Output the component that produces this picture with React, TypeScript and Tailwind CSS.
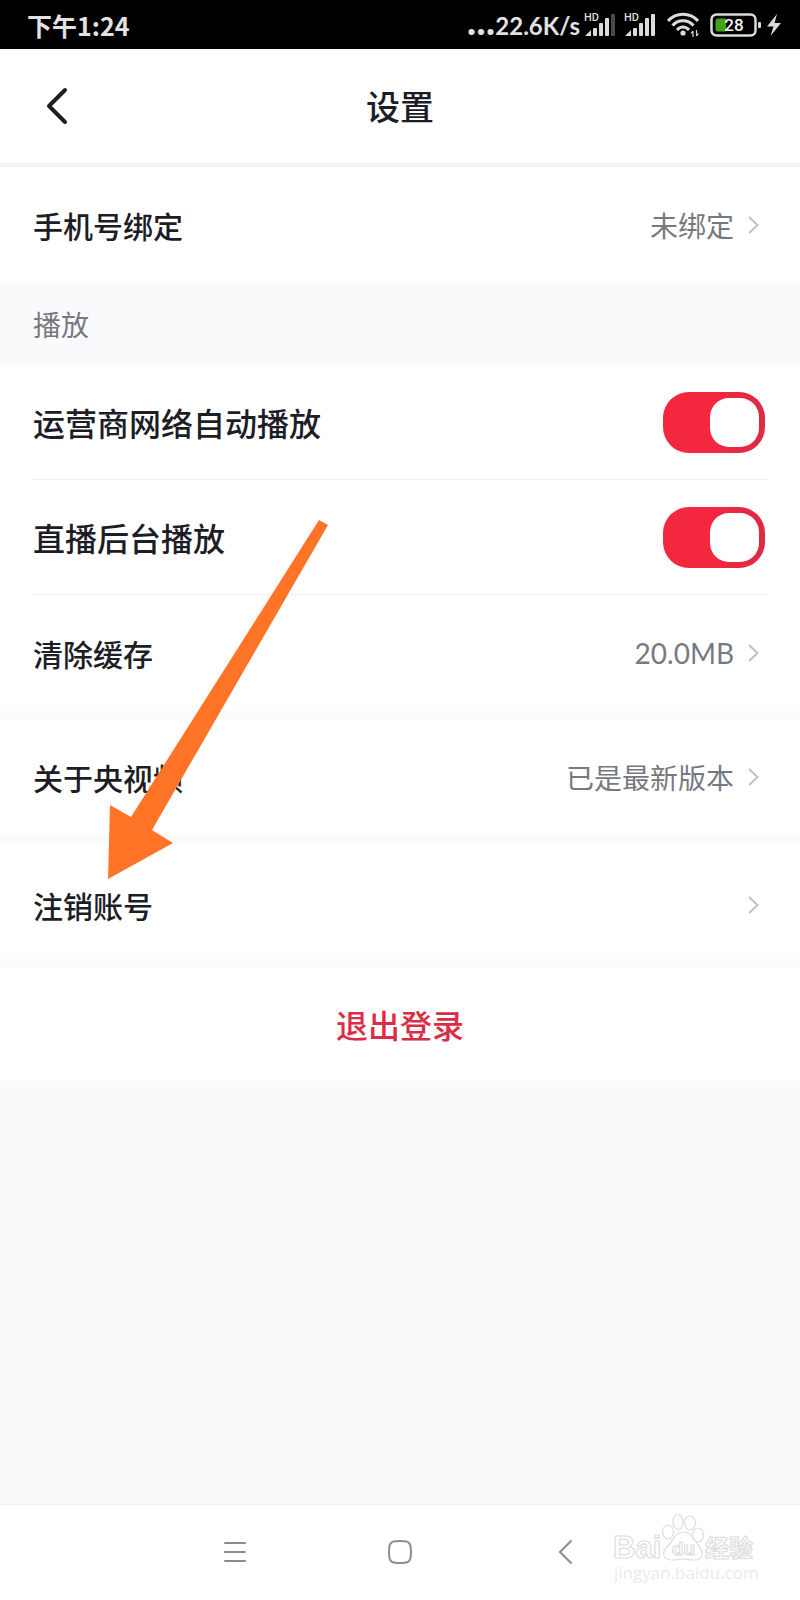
import { useState, type ReactNode } from 'react'
import clsx from 'clsx'

function SignalIcon({ weak = false }: { weak?: boolean }) {
  return (
    <svg width="31" height="28" viewBox="0 -4 31 28" fill="#dcdcdc" aria-label="HD">
      <text x="0" y="8" fontSize="11" fontWeight="500" fontFamily="Roboto, sans-serif">HD</text>
      <path d="M1 23 L7 17 V23 Z" />
      <rect x="9" y="15" width="4" height="8" rx="1" />
      <rect x="15" y="10" width="4" height="13" rx="1" />
      <rect x="21" y="5" width="4" height="18" rx="1" />
      <rect x="27" y="1" width="4" height="22" rx="1" fill={weak ? '#4a4a4a' : '#dcdcdc'} />
    </svg>
  )
}

function WifiIcon() {
  return (
    <svg width="32" height="26" viewBox="0 0 32 26" fill="none" stroke="#dcdcdc" strokeWidth="3">
      <path d="M1 9 C9 0 23 0 31 9" />
      <path d="M5.5 13.5 C11 7 21 7 26.5 13.5" />
      <path d="M10 18 C13.5 14 18.5 14 22 18" />
      <circle cx="16" cy="21" r="2.6" fill="#dcdcdc" stroke="none" />
      <path d="M26 19 V25 M29.500 18 V24 M24 21.500 L26 19 M29.500 24 L31.500 21.500" strokeWidth="1.200" />
    </svg>
  )
}

function BatteryIcon() {
  return (
    <svg width="51" height="24" viewBox="0 0 51 24" aria-label="28%">
      <rect x="1.500" y="1.500" width="44" height="21" rx="5" fill="none" stroke="#dcdcdc" strokeWidth="2.500" />
      <path d="M8 5.500 H16 V18.500 H8 Q5.500 18.500 5.500 16 V8 Q5.500 5.500 8 5.500 Z" fill="#43a312" />
      <rect x="48" y="9" width="3" height="6" rx="1" fill="#dcdcdc" />
      <text x="24" y="18" fontSize="17" fontWeight="500" textAnchor="middle" fill="#f4f4f4" fontFamily="Roboto, sans-serif">
        28
      </text>
    </svg>
  )
}

function StatusBar() {
  return (
    <div className="flex h-[49px] items-center justify-between bg-black pl-[27px] pr-[18px] text-[#e2e2e2]">
      <span className="text-[25px] font-bold leading-8">下午1:24</span>
      <div className="flex items-center">
        <span className="mr-1 flex items-baseline pb-1 font-['Lato',sans-serif] text-[24px] font-bold leading-8">
          <span className="text-[40px] leading-8">...</span>22.6K/s
        </span>
        <span className="flex pb-1"><SignalIcon weak /></span>
        <span className="ml-[9px] flex pb-1"><SignalIcon /></span>
        <span className="ml-3 flex"><WifiIcon /></span>
        <span className="ml-[11px] flex"><BatteryIcon /></span>
        <svg className="ml-[5px]" width="16" height="24" viewBox="0 0 16 24" fill="#dcdcdc">
          <path d="M11 1 L1 13.500 H7.500 L4.500 23 L15 10 H8.500 Z" />
        </svg>
      </div>
    </div>
  )
}

function Chevron() {
  return (
    <svg width="11" height="18" viewBox="0 0 11 18" fill="none" stroke="#bdbdc3" strokeWidth="1.800">
      <path d="M1 1 L9.500 9 L1 17" />
    </svg>
  )
}

function LinkRow({ label, value, className }: { label: string; value?: ReactNode; className?: string }) {
  return (
    <button
      type="button"
      className={clsx('flex h-[116px] w-full items-center justify-between bg-white pl-[33px] pr-[41px] text-left', className)}
    >
      <span className="text-[30px] font-medium leading-10">{label}</span>
      <span className="flex items-center gap-[14px] text-[28px] leading-10 text-[#777981]">
        {value}
        <Chevron />
      </span>
    </button>
  )
}

function SwitchRow({ id, label }: { id: string; label: string }) {
  const [on, setOn] = useState(true)

  return (
    <div className="bg-white px-[33px]">
      <div className="flex h-[115px] items-center justify-between border-b border-[#efeff1]">
        <label htmlFor={id} className="text-[32px] font-medium leading-10">{label}</label>
        <input
          id={id}
          type="checkbox"
          role="switch"
          checked={on}
          onChange={e => setOn(e.target.checked)}
          className="mr-[2px] flex h-[61px] w-[102px] cursor-pointer appearance-none items-center rounded-[26px] bg-[#c9c9ce] px-[6px] before:block before:size-[49px] before:rounded-[19px] before:bg-white checked:justify-end checked:bg-linear-to-r checked:from-[#f3273f] checked:from-50% checked:to-[#dc2a45]"
        />
      </div>
    </div>
  )
}

function NavButton({ label, children }: { label: string; children: ReactNode }) {
  return (
    <button type="button" aria-label={label} className="flex h-full items-center justify-center text-[#8c8c8c]">
      {children}
    </button>
  )
}

function Watermark() {
  return (
    <svg
      className="pointer-events-none absolute right-[40px] bottom-[12px]"
      width="148"
      height="76"
      viewBox="0 0 148 76"
      fill="#ffffff"
      stroke="#dedede"
      strokeWidth="1.200"
      fontFamily="'Liberation Sans', 'Noto Sans CJK SC', sans-serif"
    >
      <text x="1" y="46" fontSize="31" fontWeight="700">Bai</text>
      <path d="M71 20 C63 20 61 29 56 34 C48 41 52 48 60 48 C66 48 67 47 71 47 C75 47 77 48 82 48 C91 48 93 41 87 34 C82 29 80 20 71 20 Z" />
      <ellipse cx="56" cy="20" rx="5.500" ry="7" />
      <ellipse cx="66" cy="10" rx="5" ry="7.500" />
      <ellipse cx="78" cy="11" rx="5.500" ry="7" />
      <ellipse cx="86" cy="23" rx="5.500" ry="7" />
      <text x="60" y="43" fontSize="19" fontWeight="700">du</text>
      <text x="93" y="45" fontSize="24" fontWeight="700">经验</text>
      <text x="2" y="67" fontSize="17" fill="#ebebeb" stroke="none" fontFamily="'Open Sans', sans-serif">
        jingyan.baidu.com
      </text>
    </svg>
  )
}

export default function App() {
  return (
    <div className="relative flex min-h-screen flex-col bg-[#fafafc] font-['Noto_Sans_CJK_SC',sans-serif] text-[#1d1d26]">
      <StatusBar />

      <header className="grid h-[118px] grid-cols-3 items-center border-b-4 border-[#f1f2f8] bg-white">
        <button type="button" aria-label="返回" className="ml-[46px] flex w-10">
          <svg width="23" height="38" viewBox="0 0 23 38" fill="none" stroke="currentColor" strokeWidth="4" strokeLinecap="round" strokeLinejoin="round">
            <path d="M19 3 L3 19 L19 35" />
          </svg>
        </button>
        <h1 className="text-center text-[34px] font-medium leading-10">设置</h1>
      </header>

      <main className="flex-1">
        <LinkRow label="手机号绑定" value="未绑定" />

        {/* Playback */}
        <h2 className="flex h-[82px] items-center pl-[33px] text-[28px] leading-10 text-[#777981]">播放</h2>
        <SwitchRow id="autoplay" label="运营商网络自动播放" />
        <SwitchRow id="background" label="直播后台播放" />

        <div className="flex flex-col gap-2">
          <LinkRow label="清除缓存" value={<span className="font-['Lato',sans-serif]">20.0MB</span>} />
          <LinkRow label="关于央视频" value="已是最新版本" />
          <LinkRow label="注销账号" className="pt-2" />
          <button type="button" className="h-[114px] w-full bg-white text-[32px] font-medium leading-10 text-[#db2c46]">
            退出登录
          </button>
        </div>
      </main>

      {/* System navigation */}
      <nav className="relative grid h-24 grid-cols-3 border-t border-[#f1f1f3] bg-white px-[19%] pb-[2px]">
        <NavButton label="最近任务">
          <svg width="24" height="24" viewBox="0 0 24 24" stroke="currentColor" strokeWidth="2" strokeLinecap="round">
            <path d="M2 3 H22 M2 12 H22 M2 21 H22" />
          </svg>
        </NavButton>
        <NavButton label="主屏幕">
          <svg width="24" height="24" viewBox="0 0 24 24" fill="none" stroke="currentColor" strokeWidth="2">
            <path d="M12 1 C21 1 23 2 23 12 C23 22 21 23 12 23 C3 23 1 22 1 12 C1 2 3 1 12 1 Z" />
          </svg>
        </NavButton>
        <NavButton label="返回">
          <svg width="16" height="26" viewBox="0 0 16 26" fill="none" stroke="currentColor" strokeWidth="2" strokeLinecap="round">
            <path d="M14 2 L3 13 L14 24" />
          </svg>
        </NavButton>
        <Watermark />
      </nav>

      {/* Arrow pointing at the account row */}
      <svg className="pointer-events-none absolute left-[108px] top-[520px]" width="220" height="359" viewBox="0 0 220 359" fill="#ff7427">
        <path d="M211 0 L220 5 L44 310 L65 323 L0 359 L2 285 L23 297 Z" />
      </svg>
    </div>
  )
}
